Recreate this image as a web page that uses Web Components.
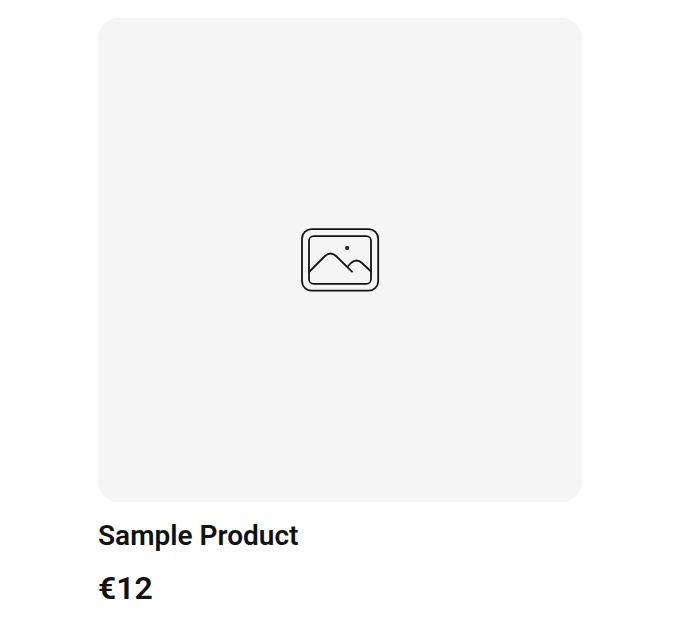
<!DOCTYPE html>
<html lang="en"><head><meta charset="utf-8"><title>Product</title>
<style>body{margin:0;background:#fff;font-family:Roboto,"Liberation Sans",sans-serif;color:#121212}</style></head>
<body>
<product-card><image-placeholder slot="media"></image-placeholder><span slot="title">Sample Product</span><span slot="price">€12</span></product-card>
<script>
customElements.define('image-placeholder', class extends HTMLElement {
  constructor(){ super(); this.attachShadow({mode:'open'}).innerHTML = `
<style>:host{display:flex;align-items:center;justify-content:center;height:484px;border-radius:20px;background:#f5f5f5}svg{display:block}</style>
<svg width="80" height="64" viewBox="300 228 80 64" fill="none" stroke="#151515" stroke-width="1.8" stroke-linecap="round" stroke-linejoin="round">
<rect x="302" y="229.200" width="76.200" height="61.500" rx="9.500"/>
<rect x="309" y="236.200" width="62" height="47.600" rx="4.500"/>
<path d="M309.500 271.500L325 256Q330.500 251 336 256L352 271.700M347.300 267L351 263Q356.500 258 362 263L371 271.500"/>
<circle cx="347.200" cy="248" r="2.100" fill="#151515" stroke="none"/>
</svg>`; }
});
customElements.define('product-card', class extends HTMLElement {
  constructor(){ super(); this.attachShadow({mode:'open'}).innerHTML = `
<style>:host{display:block;width:484px;margin:18px 0 0 98px}
.title{margin-top:16px;font-size:28px;line-height:36px;font-weight:600}
.price{margin-top:14px;font-size:32px;line-height:40px;font-weight:600}</style>
<slot name="media"></slot><div class="title"><slot name="title"></slot></div><div class="price"><slot name="price"></slot></div>`; }
});
</script></body></html>
